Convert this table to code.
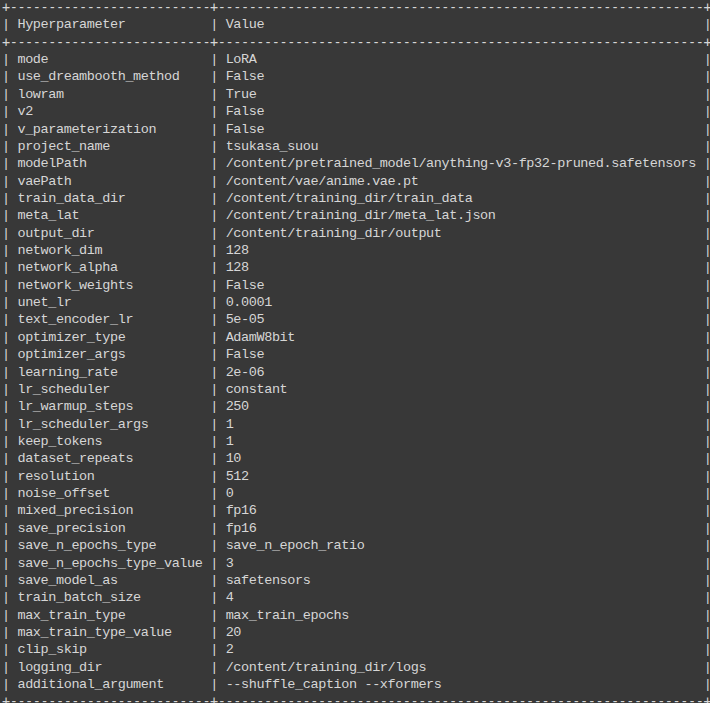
import React from 'react';

const rows: [string, string][] = [
  ['mode', 'LoRA'],
  ['use_dreambooth_method', 'False'],
  ['lowram', 'True'],
  ['v2', 'False'],
  ['v_parameterization', 'False'],
  ['project_name', 'tsukasa_suou'],
  ['modelPath', '/content/pretrained_model/anything-v3-fp32-pruned.safetensors'],
  ['vaePath', '/content/vae/anime.vae.pt'],
  ['train_data_dir', '/content/training_dir/train_data'],
  ['meta_lat', '/content/training_dir/meta_lat.json'],
  ['output_dir', '/content/training_dir/output'],
  ['network_dim', '128'],
  ['network_alpha', '128'],
  ['network_weights', 'False'],
  ['unet_lr', '0.0001'],
  ['text_encoder_lr', '5e-05'],
  ['optimizer_type', 'AdamW8bit'],
  ['optimizer_args', 'False'],
  ['learning_rate', '2e-06'],
  ['lr_scheduler', 'constant'],
  ['lr_warmup_steps', '250'],
  ['lr_scheduler_args', '1'],
  ['keep_tokens', '1'],
  ['dataset_repeats', '10'],
  ['resolution', '512'],
  ['noise_offset', '0'],
  ['mixed_precision', 'fp16'],
  ['save_precision', 'fp16'],
  ['save_n_epochs_type', 'save_n_epoch_ratio'],
  ['save_n_epochs_type_value', '3'],
  ['save_model_as', 'safetensors'],
  ['train_batch_size', '4'],
  ['max_train_type', 'max_train_epochs'],
  ['max_train_type_value', '20'],
  ['clip_skip', '2'],
  ['logging_dir', '/content/training_dir/logs'],
  ['additional_argument', '--shuffle_caption --xformers'],
];

const App: React.FC = () => {
  const w1 = Math.max('Hyperparameter'.length, ...rows.map((r) => r[0].length));
  const w2 = Math.max('Value'.length, ...rows.map((r) => r[1].length));
  const sep = '+' + '-'.repeat(w1 + 2) + '+' + '-'.repeat(w2 + 2) + '+';
  const line = (a: string, b: string) => '| ' + a.padEnd(w1) + ' | ' + b.padEnd(w2) + ' |';

  // separators in DejaVu: its hyphen is short, so the rule reads as dashes
  const Sep = () => (
    <div className="font-['DejaVu_Sans_Mono',monospace] tracking-[-0.42px]">{sep}</div>
  );

  return (
    <div className="w-[710px] h-[703px] bg-[#383838] overflow-hidden">
      <div className="-mt-px pl-[2px] whitespace-pre text-[#d6d6d6] text-[13.5px] leading-[17.36px] tracking-[-0.39px] font-['Liberation_Mono',monospace]">
        <Sep />
        <div>{line('Hyperparameter', 'Value')}</div>
        <Sep />
        {rows.map(([a, b]) => (
          <div key={a}>{line(a, b)}</div>
        ))}
        <Sep />
      </div>
    </div>
  );
};

export default App;
